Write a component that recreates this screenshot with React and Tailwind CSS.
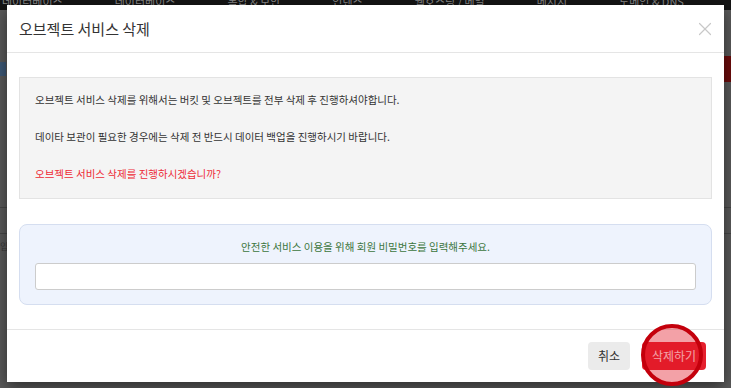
import { X } from 'lucide-react'

const font = { fontFamily: '"Noto Sans CJK KR", "Noto Sans", sans-serif' }

export default function App() {
  return (
    <div className="relative w-[731px] h-[388px] overflow-hidden bg-[#5b5b5b]" style={font}>
      {/* dimmed page behind */}
      <div className="h-[14px] bg-[#151515] flex items-start gap-[52px] pl-[2px] text-[11px] leading-[10px] text-[#8a8a8a] -mt-[4px] pt-0">
        <span>데이터베이스</span>
        <span>데이터베이스</span>
        <span>복합 &amp; 보안</span>
        <span>인텐스</span>
        <span>웹호스팅 / 메일</span>
        <span>메시지</span>
        <span>도메인 &amp; DNS</span>
      </div>
      <div className="absolute right-0 top-[56px] w-[8px] h-[26px] bg-[#6e0c0c]" />
      <div className="absolute left-0 top-[62px] w-[6px] h-[14px] bg-[#3e5a78]" />
      <div className="absolute left-0 right-0 top-[207px] h-px bg-[#474747]" />
      <div className="absolute left-0 right-0 top-[233px] h-px bg-[#474747]" />
      <div className="absolute left-0 top-[240px] text-[9px] text-[#3a3a3a]">입</div>

      {/* modal */}
      <div className="absolute left-[7px] top-[5px] w-[717px] h-[377px] bg-white flex flex-col shadow-[0_5px_15px_rgba(0,0,0,0.5)]">
        <div className="h-[48px] flex items-center justify-between pl-[12px] pr-[8px] border-b border-[#e5e5e5]">
          <h4 className="text-[15px] text-[#333] leading-none">오브젝트 서비스 삭제</h4>
          <X className="w-[22px] h-[22px] text-[#c8c8c8]" strokeWidth={1.3} />
        </div>

        <div className="px-[12px] pt-[24px] pb-[24px] flex flex-col gap-[25px]">
          <div className="bg-[#f4f4f4] border border-[#e3e3e3] pt-[14px] pb-[16px] px-[15px] flex flex-col gap-[21px] text-[10.5px] leading-[16px] text-[#333]">
            <p>오브젝트 서비스 삭제를 위해서는 버킷 및 오브젝트를 전부 삭제 후 진행하셔야합니다.</p>
            <p>데이타 보관이 필요한 경우에는 삭제 전 반드시 데이터 백업을 진행하시기 바랍니다.</p>
            <p className="text-[#ee2b36]">오브젝트 서비스 삭제를 진행하시겠습니까?</p>
          </div>

          <div className="bg-[#eef3fd] border border-[#d5def0] rounded-[8px] pt-[14px] pb-[14px] px-[15px] flex flex-col gap-[8px]">
            <p className="text-center text-[10.5px] leading-[16px] text-[#3c763d]">
              안전한 서비스 이용을 위해 회원 비밀번호를 입력해주세요.
            </p>
            <input
              type="password"
              className="h-[27px] w-full bg-white border border-[#cccccc] rounded-[3px] outline-none"
            />
          </div>
        </div>

        <div className="border-t border-[#e5e5e5] flex-1 flex items-start justify-end gap-[12px] pt-[12px] pr-[18px]">
          <button className="h-[28px] px-[10px] rounded-[4px] bg-[#ebebeb] text-[12px] text-[#333]">취소</button>
          <button className="h-[28px] w-[64px] rounded-[4px] bg-[#e5202e] text-[12px] text-white">삭제하기</button>
        </div>
      </div>

      {/* annotation circle */}
      <div className="absolute left-[641px] top-[324px] w-[62px] h-[62px] rounded-full border-[4px] border-[#c4000c] bg-[rgba(225,20,35,0.4)]" />
    </div>
  )
}
